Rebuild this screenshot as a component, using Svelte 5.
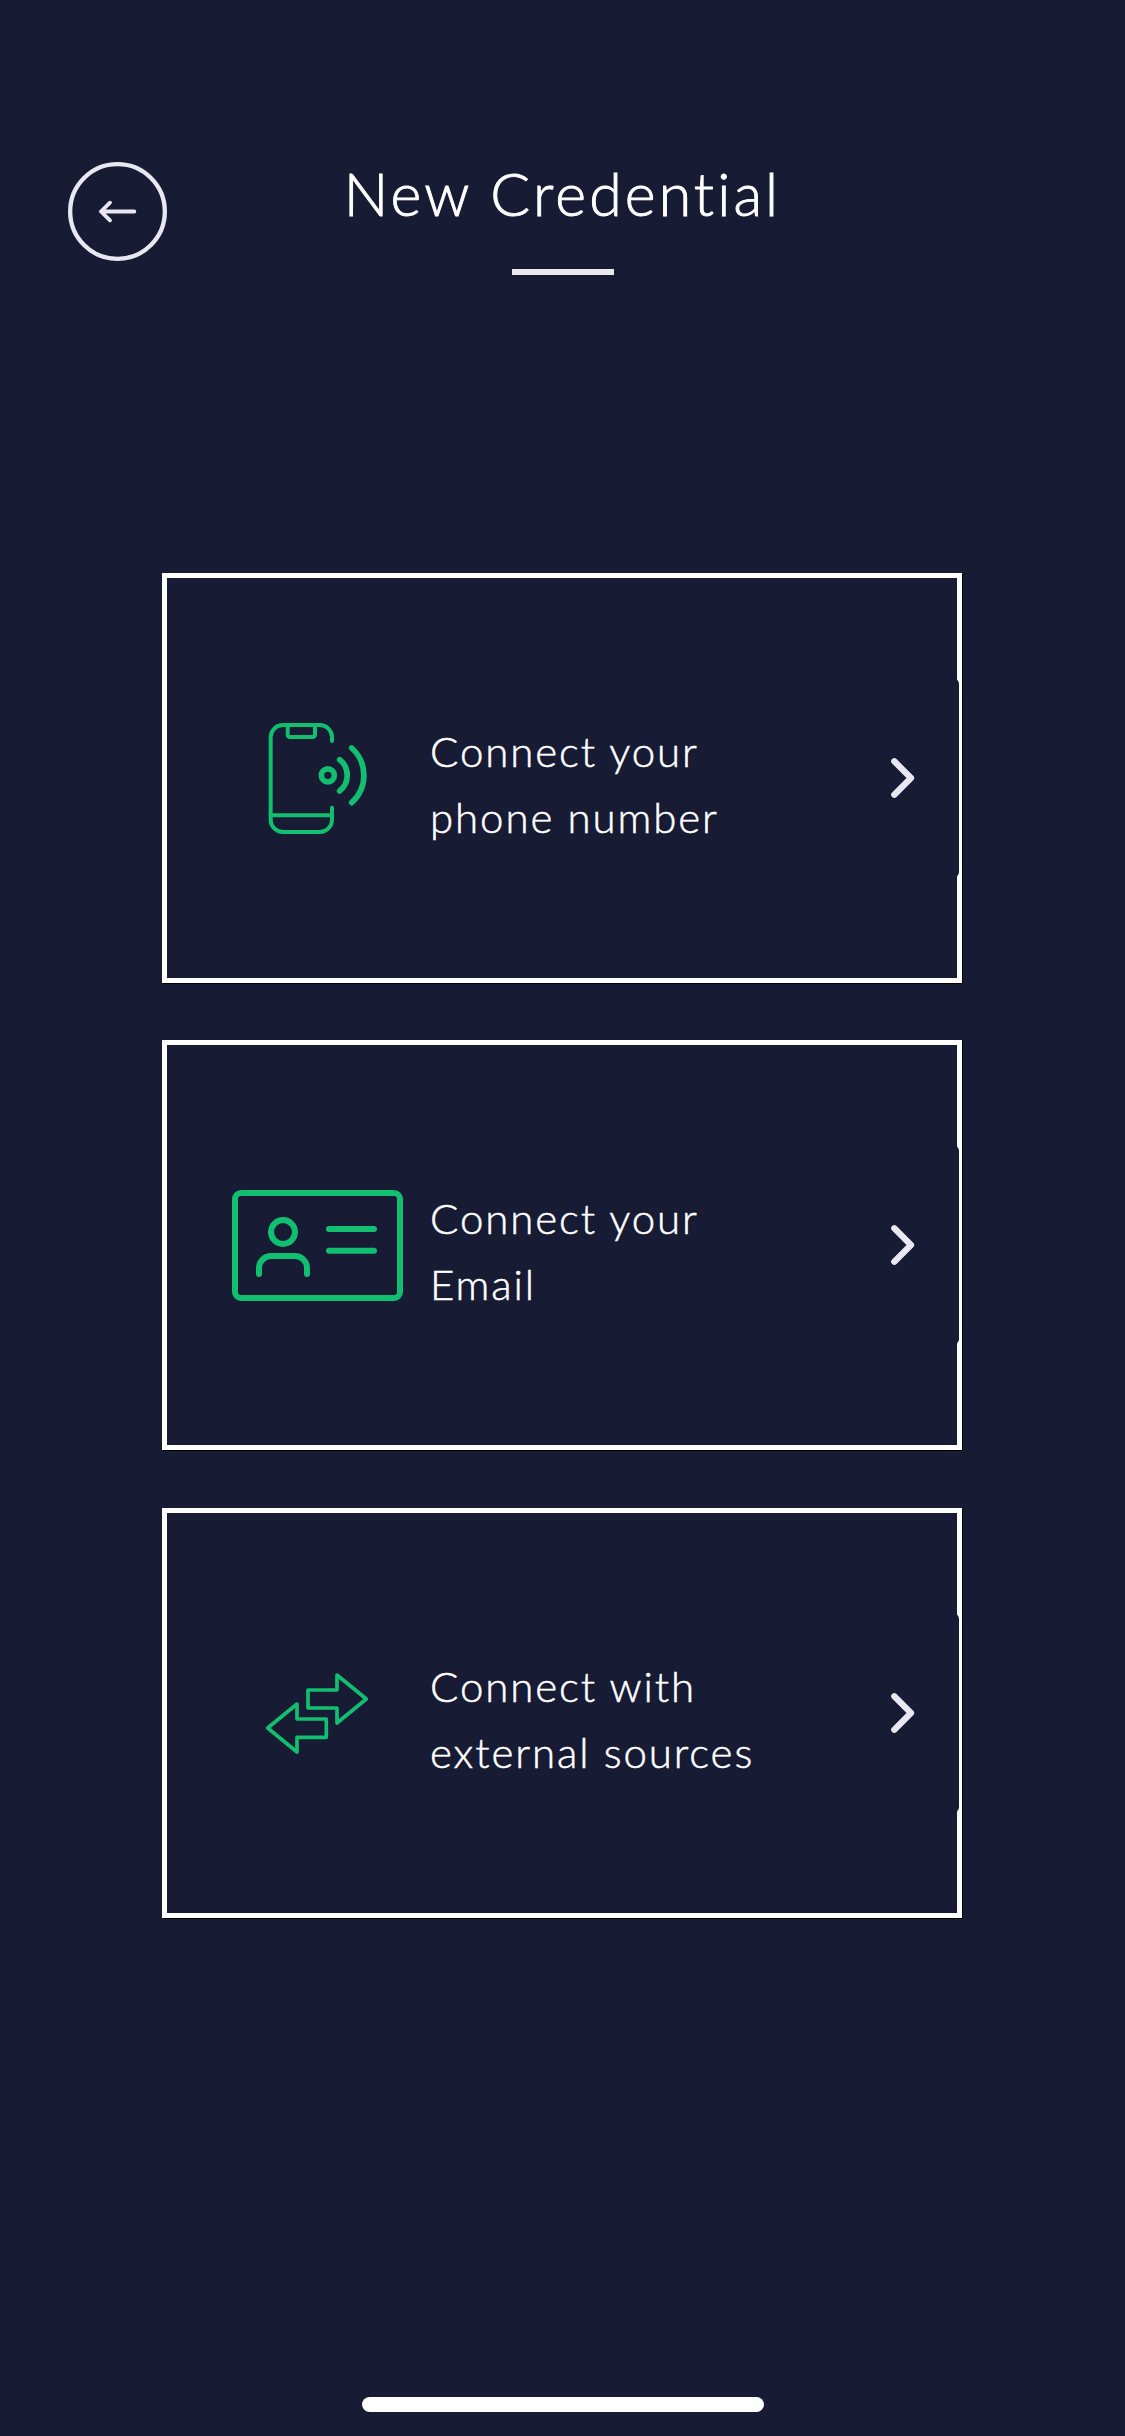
<script>
  const options = [
    { icon: 'phone', lines: ['Connect your', 'phone number'] },
    { icon: 'id', lines: ['Connect your', 'Email'] },
    { icon: 'exchange', lines: ['Connect with', 'external sources'] }
  ];
</script>

<div class="screen">
  <header>
    <button class="back" aria-label="Back">
      <svg viewBox="0 0 297 297">
        <circle cx="148.5" cy="148.5" r="142" stroke-width="13" />
        <path d="M126 122 L99 148.500 L126 175 M99 148.500 H199" stroke-width="11.500" />
      </svg>
    </button>
    <div class="heading">
      <h1>New Credential</h1>
      <div class="rule"></div>
    </div>
  </header>

  <main>
    {#each options as option}
      <section class="card">
        <svg class="icon" viewBox="0 0 630 528">
          {#if option.icon === 'phone'}
            <g stroke-width="12">
              <path d="M336 153V142a37 37 0 0 0-37-37H189a37 37 0 0 0-37 37V389a37 37 0 0 0 37 37H299a37 37 0 0 0 37-37V353" />
              <path d="M152 376H336" />
              <path d="M203 105V134a7 7 0 0 0 7 7H278a7 7 0 0 0 7-7V105" />
            </g>
            <g stroke-width="17">
              <circle cx="323.500" cy="256" r="19.500" />
              <path d="M359 209a60 60 0 0 1 0 94M395 174a110 110 0 0 1 0 164" />
            </g>
          {:else if option.icon === 'id'}
            <g stroke-width="18" transform="translate(0 39)">
              <rect x="45" y="69" width="495" height="315" rx="18" />
              <circle cx="189" cy="186" r="36" />
              <path d="M117 312V294a36 36 0 0 1 36-36H225a36 36 0 0 1 36 36V312M327 177H462M327 242H462" />
            </g>
          {:else}
            <g stroke-width="11" transform="translate(60 75)">
              <path d="M291 75L379 147L291 219V174H204V120H291Z" />
              <path d="M171 162L83 234L171 306V262H259V207H171Z" />
            </g>
          {/if}
        </svg>
        <p>
          {#each option.lines as line}
            <span>{line}</span>
          {/each}
        </p>
        <button class="open" aria-label={option.lines.join(' ')}>
          <svg viewBox="0 0 70 120">
            <path d="M10 10L60 60L10 110" stroke-width="19" />
          </svg>
        </button>
      </section>
    {/each}
  </main>

  <div class="home-bar"></div>
</div>

<style>
  :global(body) {
    margin: 0;
    background: #171b34;
  }
  .screen {
    box-sizing: border-box;
    width: 1125px;
    height: 2436px;
    display: flex;
    flex-direction: column;
    align-items: center;
    padding: 162px 0 24px;
    background: #171b34;
    color: #fff;
    font-family: Lato, "Liberation Sans", sans-serif;
    font-weight: 300;
    overflow: hidden;
  }
  header {
    width: 989px;
    height: 411px;
    display: grid;
    grid-template-columns: 99px 1fr 99px;
    align-items: start;
  }
  button {
    padding: 0;
    border: 0;
    background: none;
  }
  svg {
    display: block;
    fill: none;
    stroke: #e9e7f1;
    stroke-linecap: round;
    stroke-linejoin: round;
  }
  .back,
  .back svg {
    width: 99px;
    height: 99px;
  }
  .heading {
    display: flex;
    flex-direction: column;
    align-items: center;
  }
  h1 {
    margin: 0;
    height: 107px;
    font-size: 59px;
    line-height: 64px;
    font-weight: 300;
    letter-spacing: 3.1px;
    white-space: nowrap;
    -webkit-text-stroke: 0.9px #fff;
  }
  .rule {
    width: 102px;
    height: 6px;
    background: #e9e7f0;
  }
  main {
    display: grid;
    grid-template-rows: 410px 410px 410px;
    row-gap: 57.300px;
    margin-right: 1px;
  }
  .card {
    box-sizing: border-box;
    width: 800px;
    height: 410px;
    display: flex;
    align-items: center;
    padding-left: 53px;
    border: 5px solid #fff;
    box-shadow: 1px 1px 0 #000;
  }
  .icon {
    width: 210px;
    height: 176px;
    flex: none;
    stroke: #12bf71;
  }
  p {
    flex: none;
    width: 409px;
    margin: 0;
    padding-top: 12px;
    font-size: 42px;
    line-height: 66px;
    letter-spacing: 1.9px;
    -webkit-text-stroke: 0.5px #fff;
  }
  span {
    display: block;
    white-space: nowrap;
  }
  .open {
    flex: none;
    width: 120px;
    height: 200px;
    border-radius: 6px;
    background: #171b34;
    display: flex;
    align-items: center;
    padding-left: 52px;
    box-sizing: border-box;
  }
  .open svg {
    width: 23.300px;
    height: 40px;
    overflow: visible;
  }
  .home-bar {
    width: 402px;
    height: 15px;
    margin-top: auto;
    border-radius: 8px;
    background: #fff;
  }
</style>
